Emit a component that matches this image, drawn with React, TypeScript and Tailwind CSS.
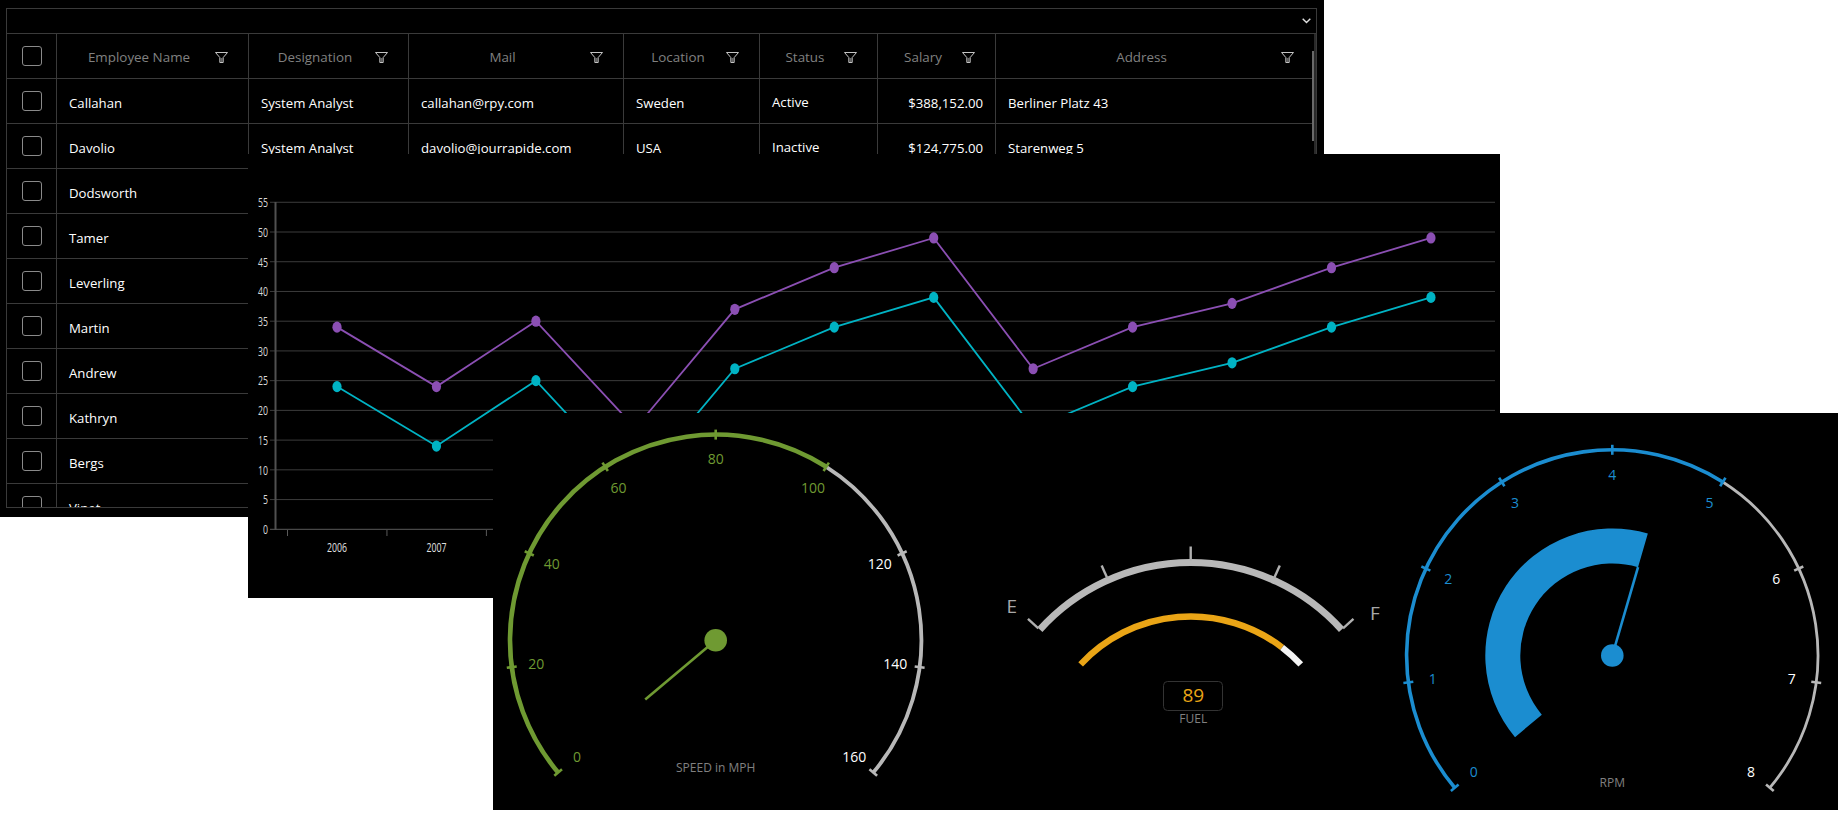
const rows = [
  { name: "Callahan", designation: "System Analyst", mail: "callahan@rpy.com", location: "Sweden", status: "Active", salary: "$388,152.00", address: "Berliner Platz 43" },
  { name: "Davolio", designation: "System Analyst", mail: "davolio@jourrapide.com", location: "USA", status: "Inactive", salary: "$124,775.00", address: "Starenweg 5" },
  { name: "Dodsworth" },
  { name: "Tamer" },
  { name: "Leverling" },
  { name: "Martin" },
  { name: "Andrew" },
  { name: "Kathryn" },
  { name: "Bergs" },
  { name: "Vinet" },
]

const headers = [
  { label: "Employee Name", width: "w-[192px]" },
  { label: "Designation", width: "w-[160px]" },
  { label: "Mail", width: "w-[215px]" },
  { label: "Location", width: "w-[136px]" },
  { label: "Status", width: "w-[118px]" },
  { label: "Salary", width: "w-[118px]" },
  { label: "Address", width: "w-[318px]" },
]

function FilterIcon() {
  return (
    <svg width="13" height="11" viewBox="0 0 13 11" className="-ml-[6px] mr-[20px] shrink-0">
      <path d="M0.5 0.5H12.5L8.2 5.5V10.5H4.8V5.5Z" fill="none" stroke="#c4c4c4" strokeWidth="1" />
      <path d="M5.2 6H7.8V10H5.2Z" fill="#666" />
    </svg>
  )
}

function Checkbox() {
  return <div className="w-5 h-5 rounded-[3px] border border-[#8a8a8a]" />
}

function EmployeeGrid() {
  return (
    <div className="absolute left-0 top-0 w-[1324px] h-[517px] bg-black pl-[6px] pt-2">
      <div className="relative w-[1311px] h-[500px] border border-[#3a3a3a] overflow-hidden">
        <div className="h-[25px] border-b border-[#3a3a3a] flex items-center justify-end pr-[5px]">
          <svg width="9" height="6" viewBox="0 0 9 6">
            <path d="M0.7 0.7L4.5 4.6L8.3 0.7" fill="none" stroke="#e0e0e0" strokeWidth="1.4" />
          </svg>
        </div>
        <div className="absolute right-0 top-[25px] bottom-0 w-[2px] bg-[#2a2a2a]" />
        <div className="absolute left-[1305px] top-[42px] w-[2px] h-[90px] bg-[#6a6a6a]" />
        <div className="w-[1307px]">
          <div className="flex h-[45px] border-b border-[#3a3a3a]">
            <div className="w-[50px] border-r border-[#3a3a3a] flex items-center justify-center">
              <Checkbox />
            </div>
            {headers.map((h) => (
              <div key={h.label} className={`${h.width} border-r last:border-r-0 border-[#3a3a3a] flex items-center pt-[3px] text-[13.4px] text-[#808080]`}>
                <span className="flex-1 text-center">{h.label}</span>
                <FilterIcon />
              </div>
            ))}
          </div>
          {rows.map((r) => (
            <div key={r.name} className="flex h-[45px] border-b border-[#3a3a3a] text-white">
              <div className="w-[50px] border-r border-[#3a3a3a] flex items-center justify-center">
                <Checkbox />
              </div>
              <div className="w-[192px] border-r border-[#3a3a3a] flex items-center px-3 pt-[5px]">{r.name}</div>
              <div className="w-[160px] border-r border-[#3a3a3a] flex items-center px-3 pt-[5px]">{r.designation}</div>
              <div className="w-[215px] border-r border-[#3a3a3a] flex items-center px-3 pt-[5px]">{r.mail}</div>
              <div className="w-[136px] border-r border-[#3a3a3a] flex items-center px-3 pt-[5px]">{r.location}</div>
              <div className="w-[118px] border-r border-[#3a3a3a] flex items-center px-3 pt-[3px]">{r.status}</div>
              <div className="w-[118px] border-r border-[#3a3a3a] flex items-center justify-end px-3 pt-[5px]">{r.salary}</div>
              <div className="w-[318px] flex items-center px-3 pt-[5px]">{r.address}</div>
            </div>
          ))}
        </div>
      </div>
    </div>
  )
}

const years = [2006, 2007, 2008, 2009, 2010, 2011, 2012, 2013, 2014, 2015, 2016, 2017]
const purple = [34, 24, 35, 17, 37, 44, 49, 27, 34, 38, 44, 49]
const cyan = [24, 14, 25, 7, 27, 34, 39, 17, 24, 28, 34, 39]
const yTicks = [0, 5, 10, 15, 20, 25, 30, 35, 40, 45, 50, 55]

const px = (i: number) => 337 + 99.45 * i
const py = (v: number) => 529.3 - 5.946 * v

function Series({ data, color }: { data: number[]; color: string }) {
  return (
    <g>
      <polyline points={data.map((v, i) => `${px(i)},${py(v)}`).join(" ")} fill="none" stroke={color} strokeWidth="1.8" />
      {data.map((v, i) => (
        <ellipse key={i} cx={px(i)} cy={py(v)} rx="4.6" ry="5.6" fill={color} />
      ))}
    </g>
  )
}

function LineChart() {
  return (
    <div className="absolute left-[248px] top-[154px] w-[1252px] h-[444px] bg-black">
      <svg width="1252" height="444" viewBox="248 154 1252 444" className="block">
        {yTicks.map((t) => (
          <g key={t}>
            <line x1="270" x2="1495" y1={py(t)} y2={py(t)} stroke={t === 0 ? "#5a5a5a" : "#3c3c3c"} strokeWidth="1" />
            <text x="268" y={py(t) + 4.8} textAnchor="end" fontSize="13" fill="#d8d8d8" textLength={t < 10 ? 5 : 10} lengthAdjust="spacingAndGlyphs">
              {t}
            </text>
          </g>
        ))}
        <line x1="275.5" x2="275.5" y1="202" y2="530" stroke="#505050" strokeWidth="2" />
        {years.map((y, i) => (
          <g key={y}>
            <line x1={px(i) - 49.5} x2={px(i) - 49.5} y1="530" y2="536" stroke="#5a5a5a" strokeWidth="1" />
            <text x={px(i)} y="551.5" textAnchor="middle" fontSize="13" fill="#e0e0e0" textLength="20" lengthAdjust="spacingAndGlyphs">
              {y}
            </text>
          </g>
        ))}
        <Series data={purple} color="#8b4fb3" />
        <Series data={cyan} color="#00b3c4" />
      </svg>
    </div>
  )
}

// angle in degrees, clockwise from the top of the dial
const polar = (cx: number, cy: number, r: number, deg: number) => {
  const a = (deg * Math.PI) / 180
  return [cx + r * Math.sin(a), cy - r * Math.cos(a)]
}

const arc = (cx: number, cy: number, r: number, from: number, to: number) => {
  const [x1, y1] = polar(cx, cy, r, from)
  const [x2, y2] = polar(cx, cy, r, to)
  return `M${x1} ${y1}A${r} ${r} 0 ${to - from > 180 ? 1 : 0} 1 ${x2} ${y2}`
}

const band = (cx: number, cy: number, r1: number, r2: number, from: number, to: number) => {
  const [x1, y1] = polar(cx, cy, r2, from)
  const [x2, y2] = polar(cx, cy, r2, to)
  const [x3, y3] = polar(cx, cy, r1, to)
  const [x4, y4] = polar(cx, cy, r1, from)
  const large = to - from > 180 ? 1 : 0
  return `M${x1} ${y1}A${r2} ${r2} 0 ${large} 1 ${x2} ${y2}L${x3} ${y3}A${r1} ${r1} 0 ${large} 0 ${x4} ${y4}Z`
}

function Dial({
  cx,
  cy,
  color,
  labels,
  stroke,
  needle,
  title,
  titleY,
}: {
  cx: number
  cy: number
  color: string
  labels: string[]
  stroke: number
  needle: number
  title: string
  titleY: number
}) {
  const r = 205.7
  const gray = "#b8b8b8"
  return (
    <>
      <path d={arc(cx, cy, r, -130, 32.5)} fill="none" stroke={color} strokeWidth={stroke} />
      <path d={arc(cx, cy, r, 32.5, 130)} fill="none" stroke={gray} strokeWidth={stroke - 0.8} />
      {labels.map((l, i) => {
        const deg = -130 + i * 32.5
        const [x1, y1] = polar(cx, cy, r - 5, deg)
        const [x2, y2] = polar(cx, cy, r + 5, deg)
        const [tx, ty] = polar(cx, cy, 181, deg)
        const on = i <= 5
        return (
          <g key={l}>
            <line x1={x1} y1={y1} x2={x2} y2={y2} stroke={on ? color : gray} strokeWidth="2.6" />
            <text x={tx} y={ty + 5} textAnchor="middle" fontSize="14" fill={on ? color : "#ffffff"}>
              {l}
            </text>
          </g>
        )
      })}
      {(() => {
        const [nx, ny] = polar(cx, cy, 92, needle)
        return <line x1={cx} y1={cy} x2={nx} y2={ny} stroke={color} strokeWidth="2.6" />
      })()}
      <circle cx={cx} cy={cy} r="11.3" fill={color} />
      <text x={cx} y={titleY} textAnchor="middle" fontSize="12" fill="#808080">
        {title}
      </text>
    </>
  )
}

function SpeedGauge() {
  return (
    <svg width="487" height="397" viewBox="493 413 487 397" className="block shrink-0">
      <Dial cx={715.7} cy={640.3} color="#6f9a32" stroke={4.6} needle={-130} labels={["0", "20", "40", "60", "80", "100", "120", "140", "160"]} title="SPEED in MPH" titleY={772} />
    </svg>
  )
}

function FuelGauge() {
  const cx = 1190.7
  const ticks = [-48, -24, 0, 24, 48]
  return (
    <svg width="410" height="397" viewBox="980 413 410 397" className="block shrink-0">
      <path d={arc(cx, 765.5, 203, -48, 48)} fill="none" stroke="#b8b8b8" strokeWidth="7" />
      {ticks.map((t) => {
        const [x1, y1] = polar(cx, 765.5, 205, t)
        const [x2, y2] = polar(cx, 765.5, 219, t)
        return <line key={t} x1={x1} y1={y1} x2={x2} y2={y2} stroke="#b0b0b0" strokeWidth="2.4" />
      })}
      <path d={arc(cx, 767, 150.5, -47, 37.4)} fill="none" stroke="#eaa516" strokeWidth="6.4" />
      <path d={arc(cx, 767, 150.5, 37.4, 47)} fill="none" stroke="#f4f4f4" strokeWidth="6.4" />
      <text x="1011.7" y="613" textAnchor="middle" fontSize="19" fill="#a8a8a8">
        E
      </text>
      <text x="1375" y="620" textAnchor="middle" fontSize="19" fill="#a8a8a8">
        F
      </text>
      <rect x="1163.5" y="681.5" width="59" height="29" rx="4" fill="none" stroke="#333333" strokeWidth="1" />
      <text x="1193.3" y="702" textAnchor="middle" fontSize="19" fill="#eaa516">
        89
      </text>
      <text x="1193.3" y="723" textAnchor="middle" fontSize="12" fill="#808080">
        FUEL
      </text>
    </svg>
  )
}

function RpmGauge() {
  return (
    <svg width="448" height="397" viewBox="1390 413 448 397" className="block shrink-0">
      <path d={band(1612.3, 655.5, 92, 127, -130, 16.25)} fill="#1b8dd0" />
      <Dial cx={1612.3} cy={655.5} color="#1b8dd0" stroke={3.6} needle={16.25} labels={["0", "1", "2", "3", "4", "5", "6", "7", "8"]} title="RPM" titleY={787} />
    </svg>
  )
}

export default function App() {
  return (
    <div className="relative w-[1838px] h-[813px] bg-white overflow-hidden font-['Open_Sans',sans-serif] text-[13.2px]">
      <EmployeeGrid />
      <LineChart />
      <div className="absolute left-[493px] top-[413px] w-[1345px] h-[397px] bg-black flex">
        <SpeedGauge />
        <FuelGauge />
        <RpmGauge />
      </div>
    </div>
  )
}
